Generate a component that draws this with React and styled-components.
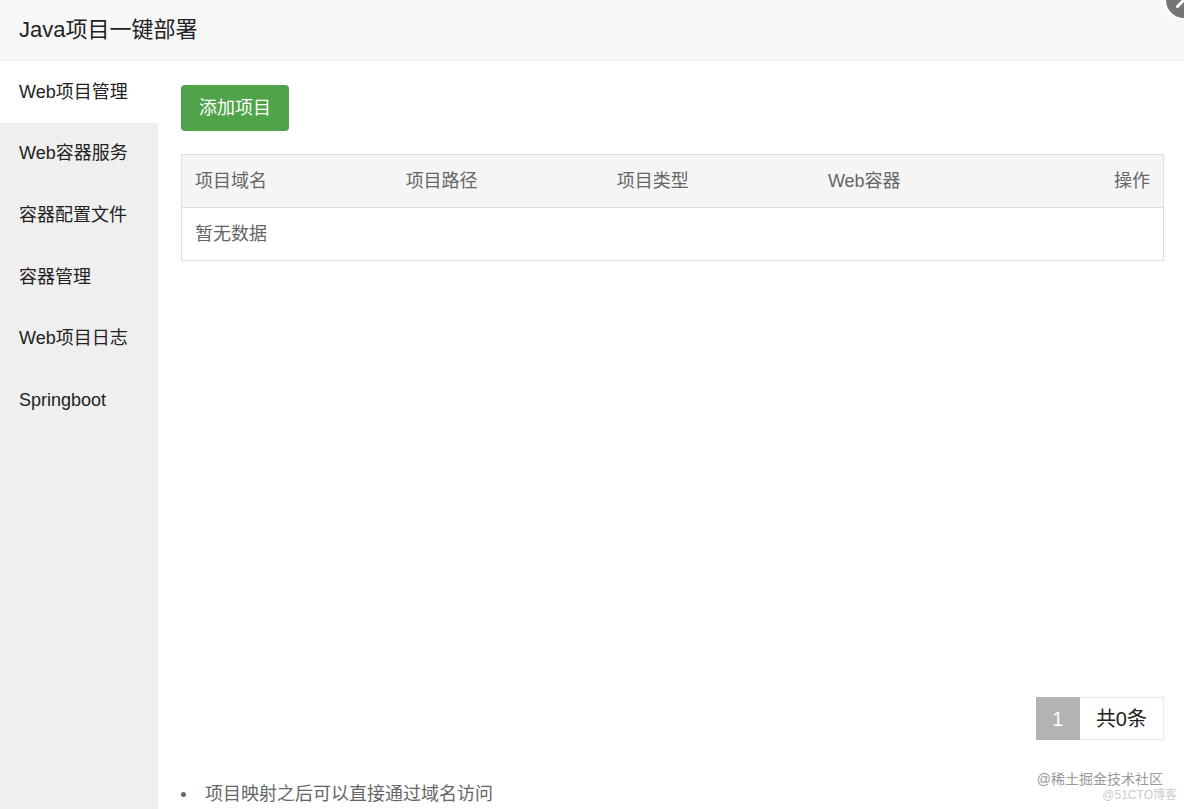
import React from 'react'
import styled, { createGlobalStyle } from 'styled-components'

const menu = ['Web项目管理', 'Web容器服务', '容器配置文件', '容器管理', 'Web项目日志', 'Springboot']
const columns = ['项目域名', '项目路径', '项目类型', 'Web容器', '操作']

export default function App() {
	return (
		<>
			<GlobalStyle />
			<Dialog>
				<Header>
					<Title>Java项目一键部署</Title>
				</Header>
				<CloseButton type="button" aria-label="关闭">
					<svg width="36" height="36" viewBox="0 0 36 36" fill="none" stroke="#fff" strokeWidth="3" strokeLinecap="round">
						<path d="M11.5 11.5L24.5 24.5M24.5 11.5L11.5 24.5" />
					</svg>
				</CloseButton>
				<Body>
					<Sidebar>
						<Menu>
							{menu.map((item, i) => (
								<MenuItem key={item} href="#" $active={i === 0}>
									{item}
								</MenuItem>
							))}
						</Menu>
					</Sidebar>
					<Content>
						<AddButton type="button">添加项目</AddButton>
						<Table>
							<thead>
								<tr>
									{columns.map(name => (
										<HeadCell key={name} scope="col">
											{name}
										</HeadCell>
									))}
								</tr>
							</thead>
							<tbody>
								<tr>
									<Cell colSpan={columns.length}>暂无数据</Cell>
								</tr>
							</tbody>
						</Table>
						<Pager>
							<CurrentPage>1</CurrentPage>
							<Total>共0条</Total>
						</Pager>
						<Tips>
							<Tip>项目映射之后可以直接通过域名访问</Tip>
						</Tips>
					</Content>
				</Body>
				<Watermarks>
					<Watermark>@稀土掘金技术社区</Watermark>
					<FaintWatermark>@51CTO博客</FaintWatermark>
				</Watermarks>
			</Dialog>
		</>
	)
}

const GlobalStyle = createGlobalStyle`
	* {
		box-sizing: border-box;
	}

	body {
		margin: 0;
		background: #fff;
		color: #222;
		font-family: 'Liberation Sans', 'Noto Sans CJK SC', sans-serif;
		font-size: 18px;
		line-height: 24px;
	}

	button {
		font: inherit;
		cursor: pointer;
	}
`

const Dialog = styled.div`
	position: relative;
	display: flex;
	flex-direction: column;
	min-height: 100vh;
	overflow: hidden;
`

const Header = styled.header`
	padding: 0 19px;
	border-bottom: 1px solid #eee;
	background: #f7f7f7;
`

const Title = styled.h1`
	margin: 0;
	font-size: 22px;
	font-weight: 400;
	line-height: 60px;
`

const CloseButton = styled.button`
	position: absolute;
	top: -20px;
	right: -20px;
	width: 40px;
	height: 40px;
	padding: 0;
	border: 2px solid #fff;
	border-radius: 50%;
	background: #757575;

	svg {
		display: block;
	}
`

const Body = styled.div`
	display: flex;
	flex: 1;
`

const Sidebar = styled.aside`
	flex: none;
	width: 158px;
	background: #efefef;
`

const Menu = styled.nav`
	display: grid;
	grid-template-rows: repeat(6, 1fr);
	height: 370px;
`

const MenuItem = styled.a`
	display: flex;
	align-items: center;
	padding: 0 19px;
	background: ${props => (props.$active ? '#fff' : 'transparent')};
	color: #222;
	white-space: nowrap;
	text-decoration: none;
`

const Content = styled.main`
	display: flex;
	flex: 1;
	flex-direction: column;
	align-items: flex-start;
	min-width: 0;
	padding: 24px 20px 0 23px;
`

const AddButton = styled.button`
	height: 46px;
	padding: 0 18px;
	border: 0;
	border-radius: 4px;
	background: #4fa348;
	color: #fff;
`

const Table = styled.table`
	width: 100%;
	margin-top: 23px;
	border: 1px solid #ddd;
	border-collapse: collapse;
	table-layout: fixed;
	color: #666;
`

const HeadCell = styled.th`
	width: 21.5%;
	height: 53px;
	padding: 0 13px;
	border-bottom: 1px solid #ddd;
	background: #f5f5f5;
	font-weight: 400;
	text-align: left;

	&:last-child {
		width: auto;
		text-align: right;
	}
`

const Cell = styled.td`
	height: 53px;
	padding: 0 13px;
`

const Pager = styled.div`
	display: flex;
	align-self: flex-end;
	margin-top: auto;
	font-size: 20px;
	line-height: 43px;
`

const CurrentPage = styled.span`
	width: 44px;
	padding-top: 1px;
	background: #b3b3b3;
	color: #fff;
	line-height: 42px;
	text-align: center;
`

const Total = styled.span`
	padding: 2px 16px 0;
	border: 1px solid #e8e8e8;
	border-left: 0;
	line-height: 39px;
`

const Tips = styled.ul`
	margin: 39px 0 0;
	padding: 0;
	color: #666;
	line-height: 30px;
	list-style: none;
`

const Tip = styled.li`
	display: flex;
	align-items: center;
	gap: 19px;

	&::before {
		content: '';
		width: 5px;
		height: 5px;
		border-radius: 50%;
		background: #666;
	}
`

const Watermarks = styled.div`
	position: absolute;
	right: 7px;
	bottom: 6px;
	display: flex;
	flex-direction: column;
	align-items: flex-end;
`

const Watermark = styled.span`
	margin-right: 14px;
	color: #999;
	font-size: 14px;
	line-height: 16px;
`

const FaintWatermark = styled.span`
	color: #ccc;
	font-size: 12px;
	line-height: 16px;
`
